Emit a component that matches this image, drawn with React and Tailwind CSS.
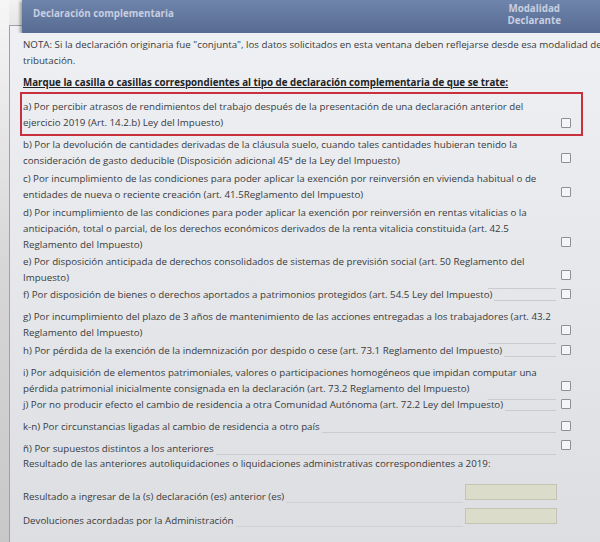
import React from "react";

const Box = () => (
  <span className="block w-[10px] h-[10px] shrink-0 border border-[#8d8f93] bg-[#f4f5f7] rounded-[1px]" />
);

function Row({ lines, cls = "", leader = "none", cbMb = "mb-[6px]" }) {
  const last = lines[lines.length - 1];
  return (
    <div className={`flex items-end ${cls}`}>
      <div className="flex-1 min-w-0">
        {lines.slice(0, -1).map((l, i) => (
          <div key={i} className="whitespace-nowrap h-[16px]">{l}</div>
        ))}
        <div className="flex items-end h-[16px]">
          <span className="whitespace-nowrap">{last}</span>
          {leader === "fill" && <span className="flex-1 border-b border-[#c9cbcf] mb-[2px] ml-[2px]" />}
          {leader === "short" && <span className="ml-auto w-[68px] border-b border-[#c9cbcf] mb-[-3px]" />}
        </div>
      </div>
      <div className={`ml-[5px] mr-[9px] ${cbMb}`}>
        <Box />
      </div>
    </div>
  );
}

export default function App() {
  return (
    <div className="w-[600px] h-[542px] overflow-hidden flex text-[9.75px] text-[#3a3b3d] font-['Open_Sans',sans-serif]">
      <div className="w-[9px] shrink-0 bg-gradient-to-b from-[#f6f6f6] via-[#d6d6d6] to-[#c8c8c8]" />
      <div className="flex-1 flex flex-col min-w-0">
        <div className="flex h-[33px] shrink-0">
          <div className="w-[13px] shrink-0 flex flex-col">
            <div className="h-[25px] bg-gradient-to-b from-[#f3f3f3] to-[#e6e6e6]" />
            <div className="flex-1 border-t border-l border-[#9fa1a4] bg-[#eef0f3]" />
          </div>
          <div className="flex-1 flex items-start justify-between bg-gradient-to-b from-[#6f84aa] to-[#586c93] shadow-[-2px_1px_3px_rgba(0,0,0,0.35)] font-bold text-[#c7cfe1] text-[9.75px]">
            <span className="ml-[11px] mt-[6px] leading-[16px]">Declaración complementaria</span>
            <div className="mr-[39px] mt-[3px] text-center leading-[12px] flex flex-col">
              <span className="h-[12px]">Modalidad</span>
              <span className="h-[12px]">Declarante</span>
            </div>
          </div>
        </div>
        <div className="flex-1 border-l border-[#9fa1a4] bg-gradient-to-b from-[#eef0f3] to-[#dcdee2] pl-[13px] pr-[20px] pt-[4px] leading-[16px]">
          <div className="whitespace-nowrap">
            NOTA: Si la declaración originaria fue "conjunta", los datos solicitados en esta ventana deben reflejarse desde esa modalidad de
          </div>
          <div>tributación.</div>
          <div className="mt-[6px] font-bold underline text-[#222325] whitespace-nowrap">
            Marque la casilla o casillas correspondientes al tipo de declaración complementaria de que se trate:
          </div>
          <div className="mt-[1px] -mx-[3px] border-2 border-[#c8303e] px-[1px] pt-[5px] pb-[3px]">
            <Row
              lines={[
                "a) Por percibir atrasos de rendimientos del trabajo después de la presentación de una declaración anterior del",
                "ejercicio 2019 (Art. 14.2.b) Ley del Impuesto)",
              ]}
              cbMb="mb-[3px]"
            />
          </div>
          <Row
            cls="pt-[1px] pb-[2px]"
            lines={[
              "b) Por la devolución de cantidades derivadas de la cláusula suelo, cuando tales cantidades hubieran tenido la",
              "consideración de gasto deducible (Disposición adicional 45ª de la Ley del Impuesto)",
            ]}
          />
          <Row
            cls="pb-[2px]"
            lines={[
              "c) Por incumplimiento de las condiciones para poder aplicar la exención por reinversión en vivienda habitual o de",
              "entidades de nueva o reciente creación (art. 41.5Reglamento del Impuesto)",
            ]}
          />
          <Row
            cls="pb-[1px]"
            lines={[
              "d) Por incumplimiento de las condiciones para poder aplicar la exención por reinversión en rentas vitalicias o la",
              "anticipación, total o parcial, de los derechos económicos derivados de la renta vitalicia constituida (art. 42.5",
              "Reglamento del Impuesto)",
            ]}
          />
          <Row
            cls="pb-[1px]"
            leader="short"
            lines={[
              "e) Por disposición anticipada de derechos consolidados de sistemas de previsión social (art. 50 Reglamento del",
              "Impuesto)",
            ]}
          />
          <Row
            cls="h-[22px] items-start"
            leader="fill"
            cbMb="mt-[2px]"
            lines={["f) Por disposición de bienes o derechos aportados a patrimonios protegidos (art. 54.5 Ley del Impuesto)"]}
          />
          <Row
            cls="pb-[2px]"
            leader="short"
            lines={[
              "g) Por incumplimiento del plazo de 3 años de mantenimiento de las acciones entregadas a los trabajadores (art. 43.2",
              "Reglamento del Impuesto)",
            ]}
          />
          <Row
            cls="h-[22px] items-start"
            leader="fill"
            cbMb="mt-[2px]"
            lines={["h) Por pérdida de la exención de la indemnización por despido o cese (art. 73.1 Reglamento del Impuesto)"]}
          />
          <Row
            leader="short"
            lines={[
              "i) Por adquisición de elementos patrimoniales, valores o participaciones homogéneos que impidan computar una",
              "pérdida patrimonial inicialmente consignada en la declaración (art. 73.2 Reglamento del Impuesto)",
            ]}
          />
          <Row
            cls="h-[22px] items-start"
            leader="fill"
            cbMb="mt-[2px]"
            lines={["j) Por no producir efecto el cambio de residencia a otra Comunidad Autónoma (art. 72.2 Ley del Impuesto)"]}
          />
          <Row
            cls="h-[22px] items-start"
            leader="fill"
            cbMb="mt-[2px]"
            lines={["k-n) Por circunstancias ligadas al cambio de residencia a otro país"]}
          />
          <Row
            cls="h-[15px] items-start"
            leader="fill"
            cbMb="-mt-[1px]"
            lines={["ñ) Por supuestos distintos a los anteriores"]}
          />
          <div className="whitespace-nowrap">
            Resultado de las anteriores autoliquidaciones o liquidaciones administrativas correspondientes a 2019:
          </div>
          <div className="mt-[12px] flex items-start">
            <span className="whitespace-nowrap mt-[5px]">Resultado a ingresar de la (s) declaración (es) anterior (es)</span>
            <span className="flex-1 self-end border-b border-[#cfd1d5] mb-[2px] mx-[2px]" />
            <span className="block w-[92px] h-[16px] mr-[23px] bg-[#dcdcca] border border-[#c3c4b6]" />
          </div>
          <div className="mt-[3px] flex items-start">
            <span className="whitespace-nowrap mt-[5px]">Devoluciones acordadas por la Administración</span>
            <span className="flex-1 self-end border-b border-[#cfd1d5] mb-[2px] mx-[2px]" />
            <span className="block w-[92px] h-[16px] mr-[23px] bg-[#dcdcca] border border-[#c3c4b6]" />
          </div>
        </div>
      </div>
    </div>
  );
}
